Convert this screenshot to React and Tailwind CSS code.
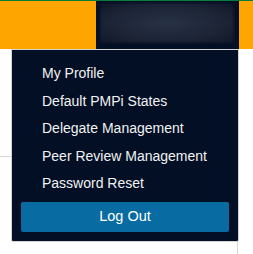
import React from "react";

const menuItems = [
  "My Profile",
  "Default PMPi States",
  "Delegate Management",
  "Peer Review Management",
  "Password Reset",
];

export default function App() {
  return (
    <div className="relative w-[253px] h-[254px] overflow-hidden bg-white font-['Liberation_Sans',Arial,sans-serif]">
      {/* Header bar */}
      <div className="flex h-[49px] border-t border-[#0b7a3b] bg-[#ffa500]">
        <div className="ml-auto mr-[14px] w-[143px] bg-[#020f25] px-[4px] pt-[2px] pb-[6px]">
          <div className="h-full w-[134px] blur-[1px] bg-[radial-gradient(ellipse_at_center,#283246_0%,#1c2436_60%,#0f1628_100%)]" />
        </div>
      </div>

      {/* Page body */}
      <div className="mt-[107px] mr-[15px] h-[120px] border-t border-r border-[#d9d9d9]" />

      {/* Dropdown menu */}
      <div className="absolute left-[11px] top-[49px] w-[228px] rounded-b-[2px] border border-[#d4d4d4] bg-[#020f25] pt-[10px] pb-[9px]">
        <ul>
          {menuItems.map((item) => (
            <li
              key={item}
              className="pl-[30px] text-[14px] leading-[27.5px] text-[#f2f2f2] cursor-pointer"
            >
              {item}
            </li>
          ))}
        </ul>
        <div className="px-[9px] pt-[4px]">
          <button className="h-[30px] w-full rounded-[2px] bg-[#086ca3] text-[14.5px] text-white">
            Log Out
          </button>
        </div>
      </div>
    </div>
  );
}
